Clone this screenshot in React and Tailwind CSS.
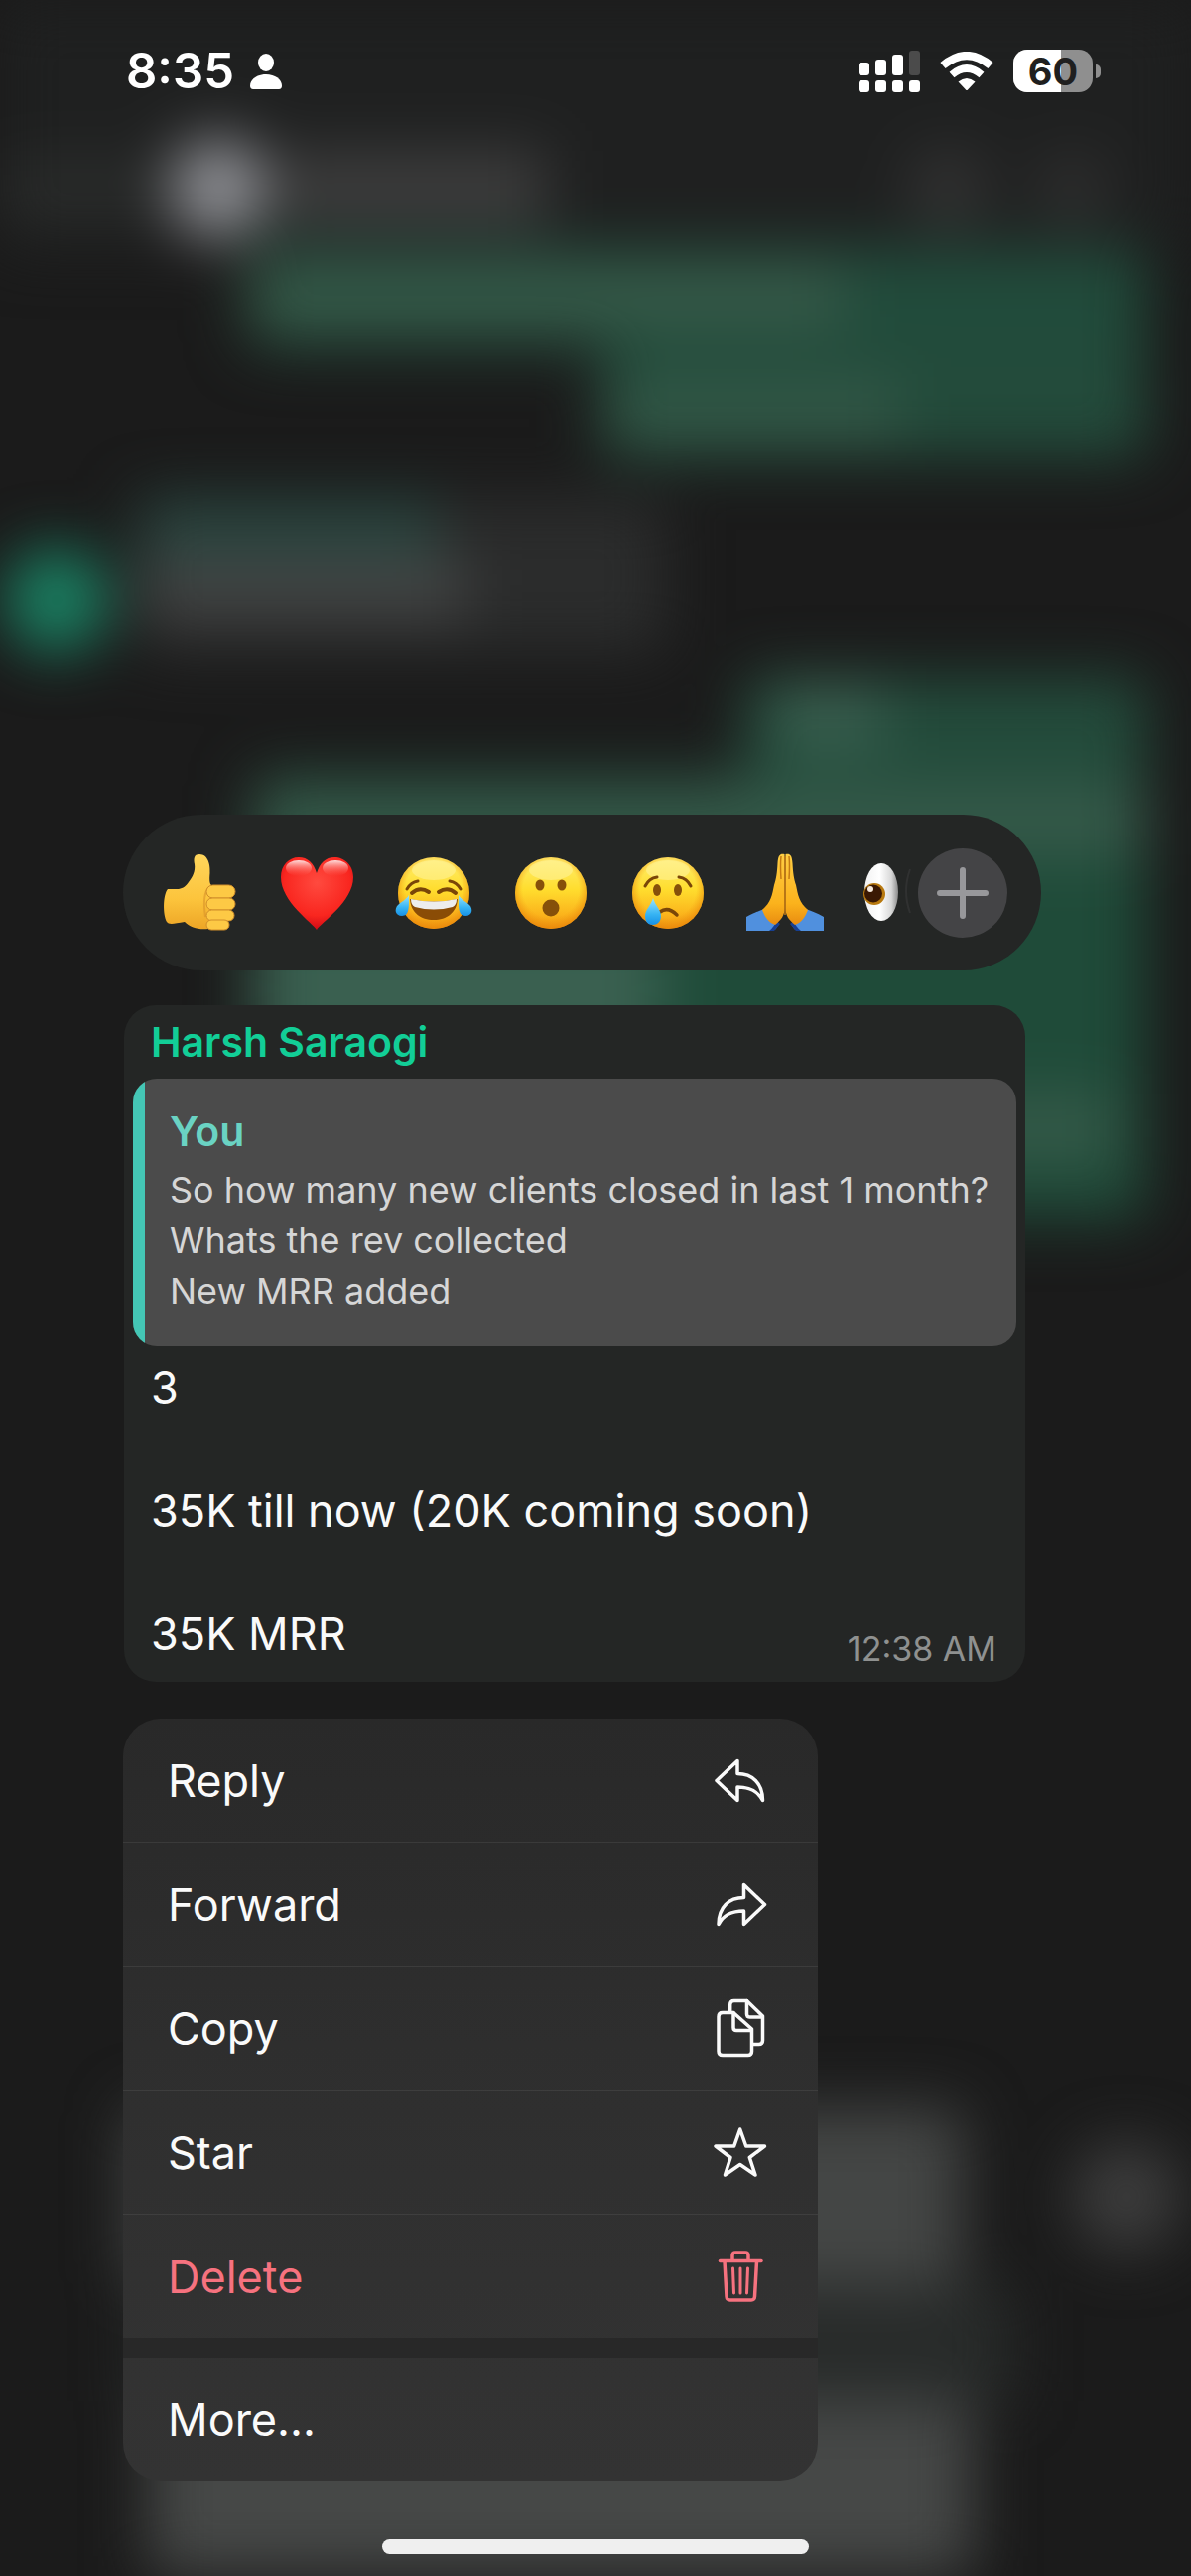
import React from 'react';

function PersonIcon() {
  return (
    <svg viewBox="0 0 34 38" className="h-[38px] w-[34px]" fill="white" aria-hidden="true">
      <ellipse cx="17" cy="10" rx="8" ry="9" />
      <path d="M17 22C8 22 1 27 1 33.500C1 35.500 2 37 4 37H30C32 37 33 35.500 33 33.500C33 27 26 22 17 22Z" />
    </svg>
  );
}

function SignalIcon() {
  return (
    <svg viewBox="0 0 62 42" className="h-[42px] w-[62px]" fill="white" aria-hidden="true">
      <rect x="0" y="12" width="11" height="13" rx="3" />
      <rect x="17" y="9" width="11" height="16" rx="3" />
      <rect x="34" y="4" width="11" height="21" rx="3" />
      <rect x="51" y="0" width="11" height="25" rx="3" fill="#4b4b4b" />
      <rect x="0" y="30" width="11" height="12" rx="3" />
      <rect x="17" y="30" width="11" height="12" rx="3" />
      <rect x="34" y="30" width="11" height="12" rx="3" />
      <rect x="51" y="30" width="11" height="12" rx="3" />
    </svg>
  );
}

function WifiIcon() {
  return (
    <svg viewBox="0 0 54 40" className="h-[40px] w-[54px]" aria-hidden="true">
      <path d="M3 14Q27 -6 51 14" fill="none" stroke="white" strokeWidth="8" />
      <path d="M12 23.500Q27 10.500 42 23.500" fill="none" stroke="white" strokeWidth="7.500" />
      <path d="M18.500 30.500Q27 23.500 35.500 30.500L28 38.500Q27 39.500 26 38.500Z" fill="white" />
    </svg>
  );
}

function Battery({ level }) {
  return (
    <div className="flex items-center gap-[3px]">
      <div className="relative flex h-[43px] w-[80px] items-center justify-center overflow-hidden rounded-[14px] bg-[#8f8f8f]">
        <div className="absolute inset-y-0 left-0 bg-white" style={{ width: `${level}%` }}></div>
        <span className="relative text-[38px] leading-none font-bold text-[#1f1f1f]">{level}</span>
      </div>
      <div className="h-[14px] w-[5px] rounded-r-full bg-[#8f8f8f]"></div>
    </div>
  );
}

function StatusBar() {
  return (
    <header className="flex h-[143px] items-center justify-between pr-[91px] pl-[127px]">
      <div className="flex items-center gap-[15px]">
        <span className="text-[49px] leading-none font-semibold">8:35</span>
        <PersonIcon />
      </div>
      <div className="flex items-center gap-[20px]">
        <SignalIcon />
        <WifiIcon />
        <Battery level={60} />
      </div>
    </header>
  );
}

/* Emoji drawings, all on an 80x80 box */

function Gradients() {
  return (
    <svg className="absolute h-0 w-0" aria-hidden="true">
      <defs>
        <linearGradient id="face" x1="0" y1="0" x2="0" y2="1">
          <stop offset="0" stopColor="#ffee70" />
          <stop offset="0.45" stopColor="#ffdd2e" />
          <stop offset="0.8" stopColor="#fbb41c" />
          <stop offset="1" stopColor="#ef930f" />
        </linearGradient>
        <radialGradient id="rim" cx="0.5" cy="0.45" r="0.56">
          <stop offset="0.7" stopColor="#f39a12" stopOpacity="0" />
          <stop offset="1" stopColor="#e8850a" stopOpacity="0.85" />
        </radialGradient>
        <linearGradient id="tear" x1="0" y1="0" x2="0" y2="1">
          <stop offset="0" stopColor="#9be4fb" />
          <stop offset="0.6" stopColor="#37b4f3" />
          <stop offset="1" stopColor="#1690e6" />
        </linearGradient>
        <radialGradient id="heart" cx="0.5" cy="0.35" r="0.65">
          <stop offset="0" stopColor="#ff4a3f" />
          <stop offset="0.7" stopColor="#f9261f" />
          <stop offset="1" stopColor="#cf0a14" />
        </radialGradient>
        <linearGradient id="shine" x1="0" y1="0" x2="0" y2="1">
          <stop offset="0" stopColor="#ffffff" stopOpacity="0.85" />
          <stop offset="1" stopColor="#ff6a60" stopOpacity="0" />
        </linearGradient>
        <linearGradient id="hand" x1="0" y1="0" x2="0" y2="1">
          <stop offset="0" stopColor="#ffd65c" />
          <stop offset="0.6" stopColor="#fcc43c" />
          <stop offset="1" stopColor="#eda526" />
        </linearGradient>
        <linearGradient id="palm" x1="0" y1="0" x2="0" y2="1">
          <stop offset="0" stopColor="#ffce44" />
          <stop offset="0.7" stopColor="#fbb21c" />
          <stop offset="1" stopColor="#e88c10" />
        </linearGradient>
        <linearGradient id="eyeball" x1="0" y1="0" x2="1" y2="0">
          <stop offset="0" stopColor="#f2f2f2" />
          <stop offset="0.45" stopColor="#ffffff" />
          <stop offset="0.8" stopColor="#d8d8d8" />
          <stop offset="1" stopColor="#8b8b8b" />
        </linearGradient>
      </defs>
    </svg>
  );
}

function Emoji({ children }) {
  return (
    <svg viewBox="0 0 80 80" className="h-20 w-20" aria-hidden="true">
      {children}
    </svg>
  );
}

function Face() {
  return (
    <>
      <circle cx="40" cy="40" r="36" fill="url(#face)" />
      <circle cx="40" cy="40" r="36" fill="url(#rim)" />
      <ellipse cx="40" cy="17" rx="22" ry="10" fill="#fff6b0" opacity="0.45" />
    </>
  );
}

function ThumbsUp() {
  return (
    <Emoji>
      <path
        d="M8 36C3 42 3 62 7 69C9 72 14 71 25 69C31 75 39 77 49 76L54 50L52 32C50 30 50 26 50.500 20C51 12 49 1 40 1C34 1 34 6 35 11C36 18 33 24 29 29C26 33 24 35 19 36Z"
        fill="url(#hand)"
      />
      <path d="M50 34C45 38 44 50 46 64" fill="none" stroke="#d9932a" strokeWidth="2" opacity="0.6" />
      <g fill="#fdc945" stroke="#d08d2a" strokeWidth="1">
        <rect x="47" y="32" width="29" height="13" rx="6.500" />
        <rect x="47" y="45" width="29" height="12" rx="6" />
        <rect x="47" y="57" width="28" height="11" rx="5.500" />
        <rect x="47" y="67" width="23" height="10" rx="5" />
      </g>
    </Emoji>
  );
}

function Heart() {
  return (
    <Emoji>
      <path
        d="M40 77C36 70 4 49 4 24C4 12 12 4 22 4C31 4 37 10 40 20C43 10 49 4 58 4C68 4 77 12 77 24C77 49 44 70 40 77Z"
        fill="url(#heart)"
      />
      <ellipse cx="22" cy="15" rx="13" ry="8" fill="url(#shine)" />
      <ellipse cx="59" cy="15" rx="13" ry="8" fill="url(#shine)" />
    </Emoji>
  );
}

function Laughing() {
  return (
    <Emoji>
      <Face />
      <g fill="none" stroke="#7a4608" strokeLinecap="round">
        <path d="M13 36Q17 29 24 28" strokeWidth="3" />
        <path d="M67 36Q63 29 56 28" strokeWidth="3" />
        <path d="M18 40Q26 33 35 39" strokeWidth="4" />
        <path d="M45 39Q54 33 62 40" strokeWidth="4" />
      </g>
      <path d="M16 46Q40 51 64 46C63 60 53 67 40 67C27 67 17 60 16 46Z" fill="#8a4c06" />
      <path d="M17 46Q40 51 63 46Q63 52 59 54Q40 59 21 54Q17 52 17 46Z" fill="#ededed" />
      <path d="M15 42C15 52 16 63 8 63C1 63 0 56 4 52C8 48 12 47 15 42Z" fill="url(#tear)" />
      <path d="M65 42C65 52 64 63 72 63C79 63 80 56 76 52C72 48 68 47 65 42Z" fill="url(#tear)" />
    </Emoji>
  );
}

function Surprised() {
  return (
    <Emoji>
      <Face />
      <g fill="#86500a">
        <ellipse cx="29" cy="32" rx="4.500" ry="5.500" />
        <ellipse cx="51" cy="32" rx="4.500" ry="5.500" />
        <circle cx="40" cy="55" r="8.500" />
      </g>
    </Emoji>
  );
}

function Crying() {
  return (
    <Emoji>
      <Face />
      <g fill="#86500a">
        <ellipse cx="29" cy="37" rx="4" ry="6" />
        <ellipse cx="50" cy="37" rx="4" ry="6" />
      </g>
      <g fill="none" stroke="#7a4608" strokeWidth="3" strokeLinecap="round">
        <path d="M17 33Q21 25 29 24" />
        <path d="M63 33Q59 25 51 24" />
        <path d="M32 59Q40 53 49 62" strokeWidth="3.500" />
      </g>
      <path d="M25 45C27 52 33 57 33 63C33 69 29 72 25 72C20 72 17 69 17 63C17 57 23 52 25 45Z" fill="url(#tear)" />
    </Emoji>
  );
}

function Praying() {
  return (
    <Emoji>
      <path d="M1 64C8 60 14 58 19 56L34 71C31 76 29 78 27 78H1Z" fill="#5090de" />
      <path d="M79 64C72 60 66 58 61 56L46 71C49 76 51 78 53 78H79Z" fill="#5090de" />
      <path d="M24 78Q30 73 31 68L35 71L29 78Z" fill="#163f92" />
      <path d="M56 78Q50 73 49 68L45 71L51 78Z" fill="#163f92" />
      <path d="M39.500 1C35 0 33 2 32.500 10C32 20 31 26 29 32C27 42 26 49 17 57C20 65 24 70 30 72C36 67 39.500 63 39.500 55Z" fill="url(#palm)" />
      <path d="M40.500 1C45 0 47 2 47.500 10C48 20 49 26 51 32C53 42 54 49 63 57C60 65 56 70 50 72C44 67 40.500 63 40.500 55Z" fill="url(#palm)" />
      <path d="M40 3V62M36 3Q35 12 36 26M44 3Q45 12 44 26" fill="none" stroke="#c57a12" strokeWidth="1.500" />
    </Emoji>
  );
}

function Eyes() {
  return (
    <svg viewBox="0 0 74 80" className="h-20 w-[74px]" aria-hidden="true">
      <ellipse cx="38" cy="39" rx="17" ry="29" fill="url(#eyeball)" />
      <circle cx="31" cy="41" r="11" fill="#b8790f" />
      <circle cx="30" cy="40.500" r="9" fill="#3a1803" />
      <circle cx="27" cy="36" r="3" fill="#f6e9dc" />
      <path d="M67 16Q59 38 67 60" fill="none" stroke="#303131" strokeWidth="2" />
    </svg>
  );
}

const reactions = [
  { label: 'Thumbs up', icon: <ThumbsUp /> },
  { label: 'Heart', icon: <Heart /> },
  { label: 'Laughing', icon: <Laughing /> },
  { label: 'Surprised', icon: <Surprised /> },
  { label: 'Crying', icon: <Crying /> },
  { label: 'Praying', icon: <Praying /> },
];

function ReactionBar() {
  return (
    <div className="mr-[151px] flex h-[157px] items-center rounded-full bg-[#242625] pr-[34px] pl-[18px]">
      {reactions.map((reaction) => (
        <button
          key={reaction.label}
          aria-label={reaction.label}
          className="flex w-[118px] shrink-0 justify-center"
        >
          {reaction.icon}
        </button>
      ))}
      <button aria-label="Eyes" className="flex flex-1 overflow-hidden">
        <Eyes />
      </button>
      <button
        aria-label="More reactions"
        className="flex size-[90px] shrink-0 items-center justify-center rounded-full bg-[#444446]"
      >
        <svg viewBox="0 0 52 52" className="size-[52px]" aria-hidden="true">
          <path d="M26 3V49M3 26H49" stroke="#98989b" strokeWidth="6" strokeLinecap="round" />
        </svg>
      </button>
    </div>
  );
}

function MessageBubble() {
  return (
    <article className="mt-[35px] mr-[167px] ml-px rounded-[32px] bg-[#242625] px-[9px] pt-3 pb-[13px]">
      <h2 className="mb-3 pl-[18px] text-[41px] leading-[50px] font-semibold text-[#12ce97]">
        Harsh Saraogi
      </h2>
      <blockquote className="overflow-hidden rounded-[24px] bg-[#4b4b4b]">
        <div className="border-l-[12px] border-[#44c6b5] pt-[29px] pr-4 pb-[29px] pl-[25px]">
          <p className="text-[41px] leading-[48px] font-semibold text-[#6ad3c3]">You</p>
          <p className="mt-[10px] text-[36px] leading-[51px] text-[#d6d6d6]">
            So how many new clients closed in last 1 month?
            <br />
            Whats the rev collected
            <br />
            New MRR added
          </p>
        </div>
      </blockquote>
      <div className="mt-3 flex items-end justify-between pr-5 pl-[18px]">
        <p className="pb-1 text-[45px] leading-[62px] text-[#fafafa]">
          3
          <br />
          <br />
          35K till now (20K coming soon)
          <br />
          <br />
          35K MRR
        </p>
        <time className="shrink-0 text-[34px] leading-[40px] text-[#8f9190]">12:38 AM</time>
      </div>
    </article>
  );
}

function MenuIcon({ children }) {
  return (
    <svg
      viewBox="0 0 60 64"
      className="h-16 w-[60px]"
      fill="none"
      stroke="currentColor"
      strokeWidth="3.5"
      strokeLinecap="round"
      strokeLinejoin="round"
      aria-hidden="true"
    >
      {children}
    </svg>
  );
}

const menuItems = [
  {
    label: 'Reply',
    icon: <path d="M7 32.500L28 12.500V25.500C43 25.500 53.500 35 53.500 52.500C48.500 43 41 39 28 39V52.500Z" />,
  },
  {
    label: 'Forward',
    icon: <path d="M55.500 32.500L34.500 12.500V25.500C19.500 25.500 9 35 9 52.500C14 43 21.500 39 34.500 39V52.500Z" />,
  },
  {
    label: 'Copy',
    icon: (
      <>
        <path d="M13 16.500H24L42.500 33V55.500Q42.500 59.500 38.500 59.500H13Q9 59.500 9 55.500V20.500Q9 16.500 13 16.500Z" />
        <path d="M24 16.500V31.500Q24 34.500 27 34.500H42" />
        <path d="M20.700 15V8.500Q20.700 4.500 24.700 4.500H37.500L53.500 20V44.500Q53.500 48.500 49.500 48.500H44" />
        <path d="M37.500 4.500V18Q37.500 21 40.500 21H53" />
      </>
    ),
  },
  {
    label: 'Star',
    icon: (
      <path d="M30.700 9L36.700 26H55.500L40.300 37.500L46 55L30.700 44.500L15.500 55L21 37.500L6 26H24.700Z" />
    ),
  },
  {
    label: 'Delete',
    danger: true,
    icon: (
      <>
        <path d="M10.500 16.500H52" />
        <path d="M23 16V11Q23 8 26 8H36Q39 8 39 11V16" />
        <path d="M15 17L17 52.500Q17.200 56 20.500 56H42Q45.300 56 45.500 52.500L47.500 17" />
        <path d="M23.500 24L24.500 49M31 24V49M38.500 24L37.500 49" strokeWidth="3" />
      </>
    ),
  },
];

function ContextMenu() {
  return (
    <nav className="mt-[37px] w-[700px] max-w-full overflow-hidden rounded-[38px] bg-linear-to-b from-[#292929] via-[#303030] via-60% to-[#333333] text-[45px] leading-none">
      <ul className="divide-y divide-white/7">
        {menuItems.map((item) => (
          <li key={item.label}>
            <button
              className={`flex h-[124px] w-full items-center justify-between pr-[49px] pl-[45px] ${
                item.danger ? 'text-[#f6727f]' : 'text-[#fafafa]'
              }`}
            >
              {item.label}
              <MenuIcon>{item.icon}</MenuIcon>
            </button>
          </li>
        ))}
      </ul>
      <div className="h-5 bg-[#282828]"></div>
      <button className="flex h-[124px] w-full items-center pl-[45px] text-[#fafafa]">More...</button>
    </nav>
  );
}

/* The chat behind the menu, out of focus */
function ChatBackdrop() {
  return (
    <div className="absolute inset-0 overflow-hidden" aria-hidden="true">
      <div className="flex h-full flex-col blur-[30px]">
        <div className="flex h-[250px] items-center bg-[#1f2020] pt-[130px]">
          <div className="h-[60px] w-[150px] bg-[#2a2c2b]"></div>
          <div className="ml-[20px] size-[100px] rounded-full bg-[#919297]"></div>
          <div className="ml-[10px] h-[76px] w-[270px] bg-[#3d3d3d]"></div>
          <div className="ml-auto size-[80px] rounded-full bg-[#333333]"></div>
          <div className="mr-[85px] ml-[50px] size-[70px] rounded-full bg-[#303030]"></div>
        </div>
        <div className="mr-[45px] ml-[250px] h-[100px] rounded-2xl bg-[#214b3b] pt-[20px]">
          <div className="h-[60px] w-[600px] bg-[#375a49]"></div>
        </div>
        <div className="mr-[45px] ml-auto h-[112px] w-[550px] rounded-2xl bg-[#234b3b] pt-[36px] pl-[10px]">
          <div className="h-[56px] w-[290px] bg-[#345948]"></div>
        </div>
        <div className="mt-[40px] flex items-end">
          <div className="ml-[4px] size-[106px] rounded-full bg-[#1a8163]"></div>
          <div className="ml-[30px] h-[156px] w-[530px] rounded-2xl bg-[#2b2c2c]">
            <div className="h-[62px] w-[300px] bg-[#2a453f]"></div>
            <div className="h-[60px] w-[330px] bg-[#434444]"></div>
          </div>
        </div>
        <div className="mt-[24px] mr-[45px] ml-auto h-[100px] w-[405px] rounded-2xl bg-[#234b3b] pt-[10px] pl-[30px]">
          <div className="h-[60px] w-[110px] bg-[#3b6151]"></div>
        </div>
        <div className="mr-[45px] ml-[255px] h-[448px] rounded-2xl bg-[#1f4b39] pt-[10px]">
          <div className="h-[70px] bg-[#365a4a]"></div>
          <div className="mt-[74px] h-[120px] w-[410px] bg-[#3b6151]"></div>
          <div className="mt-[46px] ml-[600px] h-[70px] w-[270px] bg-[#345948]"></div>
        </div>
        <div className="mt-auto flex items-center">
          <div className="ml-[130px] h-[180px] w-[840px] rounded-2xl bg-[#444645]"></div>
          <div className="mr-[10px] ml-auto size-[110px] rounded-full bg-[#3d3d3d]"></div>
        </div>
        <div className="ml-[140px] h-[116px] w-[880px] bg-[#282b2a]"></div>
        <div className="ml-[150px] h-[176px] w-[830px] bg-[#464847]"></div>
      </div>
    </div>
  );
}

export default function App() {
  return (
    <div className="relative min-h-screen bg-[#1b1b1b] font-['Inter','Liberation_Sans',sans-serif] text-white">
      <ChatBackdrop />
      <Gradients />
      <div className="relative flex min-h-screen flex-col">
        <StatusBar />
        <main className="flex flex-1 flex-col justify-end pt-10 pl-[124px]">
          <ReactionBar />
          <MessageBubble />
          <ContextMenu />
        </main>
        <footer className="flex justify-center pt-[59px] pb-[22px]">
          <div className="h-[15px] w-[430px] rounded-full bg-[#efefef]"></div>
        </footer>
      </div>
    </div>
  );
}
